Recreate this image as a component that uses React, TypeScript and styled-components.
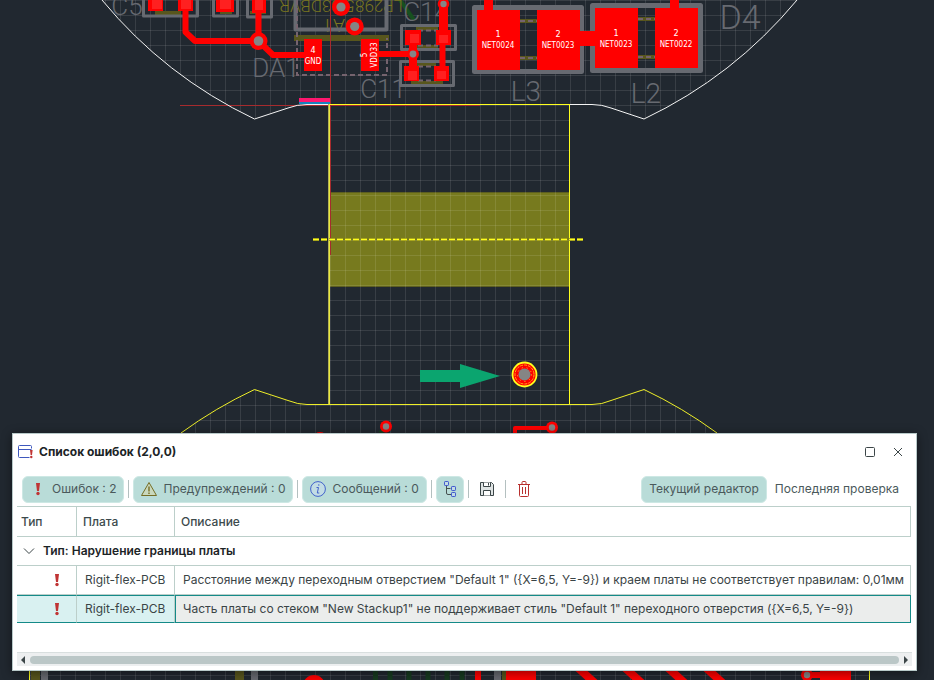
import React from 'react';
import styled, { createGlobalStyle } from 'styled-components';

const GlobalStyle = createGlobalStyle`
  *, *::before, *::after { box-sizing: border-box; }
  body { margin: 0; background: #212830; }
`;

const RED = '#ff0000';
const SILK = '#676a71';
const OLIVE = '#58561d';
const YELLOW = '#ffff1e';

/* ---------- layout ---------- */

const Workspace = styled.main`
  display: grid;
  grid-template: minmax(100vh, auto) / minmax(0, 1fr);
  background: #212830;
  font-family: Inter, "Open Sans", sans-serif;
  font-size: 12px;
  font-weight: 400;
  line-height: 16px;
  color: #3a4446;
`;

const Canvas = styled.svg`
  grid-area: 1 / 1;
  display: block;
  width: 100%;
  height: 100vh;
`;

const Dialog = styled.section`
  grid-area: 1 / 1;
  align-self: end;
  z-index: 1;
  margin: 0 17px 9px 12px;
  padding: 0 4px 4px;
  background: #fff;
  border: 1px solid #b8c9c9;
  box-shadow: 0 2px 10px rgba(0, 0, 0, 0.45);
`;

const TitleBar = styled.header`
  display: flex;
  align-items: center;
  height: 36px;
  gap: 6px;
  padding-right: 3px;
`;

const Title = styled.h1`
  flex: 1;
  margin: 0;
  font-size: 12px;
  font-weight: 700;
  color: #1c2426;
`;

const WindowButton = styled.button`
  display: flex;
  align-items: center;
  justify-content: center;
  width: 22px;
  height: 22px;
  padding: 0;
  border: 0;
  background: none;
  color: #3c4648;
`;

const Toolbar = styled.div`
  display: flex;
  align-items: center;
  height: 36px;
  gap: 4px;
  padding: 2px 5px 0 5px;
`;

const ToolButton = styled.button<{ $active?: boolean; $square?: boolean }>`
  display: flex;
  align-items: center;
  justify-content: center;
  gap: 6px;
  height: 27px;
  min-width: 28px;
  padding: ${(p) => (p.$square ? '0' : '0 7px')};
  border: 1px solid ${(p) => (p.$active ? '#cde8e4' : 'transparent')};
  border-radius: 6px;
  background: ${(p) => (p.$active ? '#b9dcd8' : 'transparent')};
  font: inherit;
  color: #4a595b;
  white-space: nowrap;
`;

const Separator = styled.span`
  width: 1px;
  height: 18px;
  background: #b4c0c0;
`;

const ViewSwitch = styled.div`
  display: flex;
  margin-left: auto;
`;

const TableArea = styled.div`
  height: 146px;
  overflow: hidden;
  padding-right: 1px;
`;

const ErrorTable = styled.table`
  width: 100%;
  table-layout: fixed;
  border-collapse: separate;
  border-spacing: 0;
  text-align: left;
  white-space: nowrap;
`;

const HeadCell = styled.th<{ $width?: number }>`
  width: ${(p) => (p.$width ? `${p.$width}px` : 'auto')};
  height: 31px;
  padding: 0 6px;
  border: solid #bccfca;
  border-width: 1px 1px 1px 0;
  font-weight: 500;
  color: #3c4a4c;
  &:first-child { padding-left: 4px; }
`;

const GroupCell = styled.th`
  height: 29px;
  padding: 0 6px;
  border-bottom: 1px solid #bccfca;
  font-weight: 600;
  color: #1c2426;
`;

const GroupToggle = styled.button`
  display: flex;
  align-items: center;
  gap: 8px;
  padding: 0;
  border: 0;
  background: none;
  font: inherit;
  color: inherit;
`;

const Row = styled.tr<{ $selected?: boolean }>`
  td {
    height: ${(p) => (p.$selected ? '28px' : '29px')};
    padding: 0 8px;
    overflow: hidden;
    border: solid #bccfca;
    border-width: 0 1px 1px 0;
    ${(p) =>
      p.$selected &&
      `
      background: #d9f1f1;
      border-width: 1px 1px 1px 0;
      border-top-color: #148a88;
      border-bottom-color: #148a88;
    `}
  }
  td:first-child { padding: 0 15px 0 0; }
  td:first-child svg { display: block; margin-left: auto; }
  td:last-child {
    ${(p) => p.$selected && 'background: #ebedec; border: 1px solid #148a88; padding-left: 7px;'}
  }
`;

const ScrollBar = styled.div`
  display: flex;
  align-items: center;
  gap: 4px;
  height: 14px;
  padding: 0 3px;
  background: #edeff0;
  border-top: 1px solid #d9dfdf;
`;

const ScrollArrow = styled.button`
  display: flex;
  padding: 0;
  border: 0;
  background: none;
`;

const ScrollThumb = styled.span`
  flex: 1;
  height: 8px;
  border-radius: 4px;
  background: #bbc7c7;
`;

/* ---------- icons ---------- */

const ErrorMark = ({ width = 8 }: { width?: number }) => (
  <svg width={width} height="14" viewBox="0 0 8 14" aria-hidden="true">
    <path d="M2 1h4l-1 8H3z" fill="#c03434" />
    <circle cx="4" cy="11.5" r="1.7" fill="#c03434" />
  </svg>
);

const ListIcon = () => (
  <svg width="16" height="16" viewBox="0 0 16 16" fill="none" aria-hidden="true">
    <path d="M12.500 13.500H2.500a1 1 0 0 1-1-1v-10a1 1 0 0 1 1-1h11a1 1 0 0 1 1 1v2M1.500 5.500h13" stroke="#3f58bd" />
    <path d="M13 6h2.600l-.600 5h-1.400z" fill="#c03434" />
    <circle cx="14.300" cy="13" r="1.200" fill="#c03434" />
  </svg>
);

const WarningIcon = () => (
  <svg width="16" height="16" viewBox="0 0 16 16" fill="none" stroke="#756d24" strokeLinejoin="round" aria-hidden="true">
    <path d="M8 1.500 15.500 14.500H.500z" fill="#c9d8bd" />
    <path d="M8 5.500v5" strokeWidth="1.400" />
    <path d="M8 11.500v1.500" strokeWidth="1.400" />
  </svg>
);

const InfoIcon = () => (
  <svg width="16" height="16" viewBox="0 0 16 16" fill="none" stroke="#4262cb" aria-hidden="true">
    <circle cx="8" cy="8" r="7.400" fill="#c2dce4" />
    <path d="M6.500 6.500h2l-1.200 5.500h2" />
    <circle cx="8.800" cy="4" r=".7" fill="#4262cb" stroke="none" />
  </svg>
);

const TreeIcon = () => (
  <svg width="14" height="18" viewBox="0 0 14 18" fill="none" aria-hidden="true">
    <path d="M3.500 5.500V13a1.500 1.500 0 0 0 1.500 1.500H8M3.500 8.500h4" stroke="#45504f" />
    <g stroke="#3f58cf" fill="#c2dce4">
      <rect x="1.500" y="1.500" width="4" height="4" rx=".7" />
      <rect x="8.500" y="6.500" width="4" height="4" rx=".7" />
      <rect x="8.500" y="12.500" width="4" height="4" rx=".7" />
    </g>
  </svg>
);

const SaveIcon = () => (
  <svg width="16" height="16" viewBox="0 0 16 16" fill="none" stroke="#3c4648" aria-hidden="true">
    <path d="M1.500 1.500h11l2 2v11h-13z" fill="#dfe4e4" strokeLinejoin="round" />
    <path d="M4.500 1.500v4h7v-4M9.500 2v2.500M4.500 14.500v-5h7v5" fill="#fff" />
  </svg>
);

const TrashIcon = () => (
  <svg width="14" height="16" viewBox="0 0 14 16" fill="none" stroke="#b8302f" aria-hidden="true">
    <path d="M1 3.500h12M5 3V1.500a1 1 0 0 1 1-1h2a1 1 0 0 1 1 1V3M2.500 3.500v11a1 1 0 0 0 1 1h7a1 1 0 0 0 1-1v-11M5.500 6v7M8.500 6v7" />
  </svg>
);

const ChevronDown = () => (
  <svg width="12" height="8" viewBox="0 0 12 8" fill="none" stroke="#3c4648" aria-hidden="true">
    <path d="M1 1.500l5 5 5-5" />
  </svg>
);

const Arrow = ({ dir }: { dir: 'left' | 'right' }) => (
  <svg width="6" height="8" viewBox="0 0 6 8" aria-hidden="true">
    <path d={dir === 'left' ? 'M5 0v8L1 4z' : 'M1 0v8l4-4z'} fill="#3c4648" />
  </svg>
);

/* ---------- circuit board ---------- */

const BoardText = styled.text<{ $size: number; $fill: string }>`
  font-family: "DejaVu Sans Condensed", "DejaVu Sans", sans-serif;
  font-size: ${(p) => p.$size}px;
  font-weight: 400;
  fill: ${(p) => p.$fill};
  text-anchor: middle;
`;

const Designator = styled(BoardText)`
  font-family: Roboto, sans-serif;
  font-weight: 300;
`;

type Via = { x: number; y: number; r: number; hole: number };
const vias: Via[] = [
  { x: 258.5, y: 41, r: 9, hole: 4.8 },
  { x: 341, y: 7, r: 9, hole: 4.6 },
  { x: 354.7, y: 26.5, r: 9, hole: 4.6 },
  { x: 413, y: 54, r: 6, hole: 3.4 },
  { x: 443.5, y: 4, r: 5.8, hole: 3.2 },
  { x: 386, y: 426.5, r: 6, hole: 3.2 },
  { x: 552, y: 427.5, r: 6, hole: 3.2 },
  { x: 314, y: 686, r: 11, hole: 4 },
  { x: 807, y: 675, r: 6, hole: 3.2 },
];

const pads = [
  [148, -5, 15, 16], [178, -5, 15, 16], [216, -5, 18, 17], [252, -5, 14, 18],
  [304, 39, 18, 32], [361, 39, 18, 32],
  [405, 30, 16, 15], [436, 30, 15, 15], [404, 66, 15, 15], [434, 66, 15, 15],
  [477, 10, 43, 60], [537, 10, 43, 60], [595, 8, 43, 60], [655, 8, 43, 60],
  [475, 668, 6, 14], [506, 668, 30, 14], [820, 668, 31, 14],
];

const padLights = [
  [152, 0, 10, 9], [181, 0, 10, 9], [220, 0, 11, 9], [255, 0, 8, 10],
  [410, 34, 9, 9], [439, 35, 9, 8], [408, 71, 9, 9], [437, 71, 9, 8],
];

const silkBoxes = [
  [143.5, -8, 54, 24, 3], [213.5, -8, 24, 24, 3], [247.500, -8, 24, 25, 3],
  [401.5, 25.5, 54, 24, 3], [400.5, 61.5, 53, 24, 3],
  [474.5, 7.5, 107, 64, 5], [592.5, 5.5, 108, 65, 5],
];

const oliveBars = [
  [155, 11, 26, 4], [220, 11, 12, 3], [250, 11, 16, 3],
  [416, 27, 22, 3], [416, 45, 22, 3], [414, 63, 22, 3], [411, 81, 32, 3],
  [520, 19, 17, 4], [520, 56, 17, 4], [638, 17, 17, 4], [638, 55, 17, 4],
  [294, 35, 95, 6], [31, 670, 9, 10], [235, 670, 9, 10], [502, 670, 4, 10],
];

const BOARD_TOP = 'M102 0A449 449 0 0 0 254.500 119L288 108Q297 104.500 307 104.500H592Q602 104.500 611 108L644 119A449 449 0 0 0 797 0Z';
const BOARD_BOTTOM = 'M181 433A449 449 0 0 1 254.500 389.500L288 400.500Q298 404.500 307 404.500H592Q602 404.500 611 400.500L644 389.500A449 449 0 0 1 717 433';

const Board = () => (
  <Canvas viewBox="0 0 934 680" preserveAspectRatio="xMidYMax slice" role="img" aria-label="Плата Rigit-flex-PCB">
    <defs>
      <pattern id="grid" width="15" height="15" patternUnits="userSpaceOnUse">
        <path d="M.500 0V15M0 .500H15" stroke="#fff" strokeOpacity=".1" />
      </pattern>
    </defs>
    <rect width="934" height="680" fill="#212830" />
    <rect x="330" y="192" width="239" height="94" fill="#777a1e" />
    <path d="M330 192.500H569M330 286.500H569" stroke="#5c5e20" />
    <g fill="url(#grid)">
      <path d={BOARD_TOP} />
      <rect x="330" y="105" width="239" height="299" />
      <path d={`${BOARD_BOTTOM}Z`} />
      <rect x="30" y="670" width="839" height="10" />
    </g>

    <path d="M400 0L414 20" stroke="#17501f" strokeWidth="4" />
    <path d="M380 433L386 427" stroke="#17401f" strokeWidth="4" />
    <g fill={OLIVE}>
      {oliveBars.map(([x, y, w, h], i) => <rect key={i} x={x} y={y} width={w} height={h} />)}
    </g>
    <path d="M375.500 670v10M390 670v10M409 670v10M428 670v10M447 670v10M462 670v10" stroke="#173b20" strokeWidth="5" />
    <g transform="rotate(180 341 7)">
      <Designator $size={17} $fill="#7a7620" x="341" y="14">LP2985-33DBVR</Designator>
    </g>
    <g transform="rotate(180 340 26)">
      <Designator $size={19} $fill="#7a7620" x="340" y="33">DA1</Designator>
    </g>
    <g fill="none" stroke={SILK} strokeLinejoin="round">
      {silkBoxes.map(([x, y, w, h, s], i) => <rect key={i} x={x} y={y} width={w} height={h} strokeWidth={s} />)}
      <path d="M295.500 0V29.500H386.500V0" strokeWidth="4" />
    </g>
    <path d="M44.500 670v10M254.500 670v10M497.500 670v10" stroke={SILK} strokeWidth="7" />
    <path d="M297 0V75H387V38" fill="none" stroke="#75636e" strokeWidth="2" strokeDasharray="5 3" />
    <path d="M418 30.500h20M418 45.500h20M418 66.500h18M418 80.500h18M520 21h17M520 58h17M638 19h17M638 57h17" stroke="#75636e" strokeWidth="2" strokeDasharray="5 3" />

    <Designator $size={26} $fill={SILK} x="127" y="15">C5</Designator>
    <Designator $size={26} $fill={SILK} x="276" y="77">DA1</Designator>
    <Designator $size={26} $fill={SILK} x="426" y="21">C14</Designator>
    <Designator $size={26} $fill={SILK} x="383" y="98">C11</Designator>
    <Designator $size={28} $fill={SILK} x="526" y="101">L3</Designator>
    <Designator $size={28} $fill={SILK} x="646" y="103">L2</Designator>
    <Designator $size={34} $fill={SILK} x="740" y="29">D4</Designator>

    <g fill="none" stroke={RED} strokeWidth="6" strokeLinejoin="round">
      <path d="M185.500 0V32L195 41H258.500V5M258.500 41L273 55H305M379 54H413" />
      <path d="M413 44V67" strokeWidth="8" />
      <path d="M443.500 4V32" strokeWidth="9" />
      <path d="M442.500 44V67" />
      <path d="M488.500 0V11M674.500 0V9" strokeWidth="9" />
      <path d="M580 38.500H596" strokeWidth="15" />
      <path d="M515 436V428H552" strokeWidth="4" />
      <path d="M575 665L597 685M622 665L646 687M665 665L689 687M703 665L727 687" strokeWidth="8" />
      <path d="M807 675H822" />
    </g>
    <g fill={RED}>
      {pads.map(([x, y, w, h], i) => <rect key={i} x={x} y={y} width={w} height={h} />)}
    </g>
    <g fill="#ff2020">
      {padLights.map(([x, y, w, h], i) => <rect key={i} x={x} y={y} width={w} height={h} />)}
    </g>
    {vias.map((v, i) => (
      <g key={i}>
        <circle cx={v.x} cy={v.y} r={v.r} fill={RED} />
        <circle cx={v.x} cy={v.y} r={v.hole} fill="#858585" />
      </g>
    ))}
    <ellipse cx="320" cy="434" rx="4" ry="2" fill={RED} />

    <BoardText $size={9} $fill="#fff" x="313" y="53">4</BoardText>
    <BoardText $size={8} $fill="#fff" x="313" y="64">GND</BoardText>
    <g transform="rotate(-90 370 55)">
      <BoardText $size={8} $fill="#fff" x="370" y="52">5</BoardText>
      <BoardText $size={8} $fill="#fff" x="370" y="62">VDD33</BoardText>
    </g>
    <BoardText $size={9} $fill="#fff" x="498" y="37">1</BoardText>
    <BoardText $size={8} $fill="#fff" x="498" y="48">NET0024</BoardText>
    <BoardText $size={9} $fill="#fff" x="558" y="37">2</BoardText>
    <BoardText $size={8} $fill="#fff" x="558" y="48">NET0023</BoardText>
    <BoardText $size={9} $fill="#fff" x="616" y="36">1</BoardText>
    <BoardText $size={8} $fill="#fff" x="616" y="47">NET0023</BoardText>
    <BoardText $size={9} $fill="#fff" x="676" y="36">2</BoardText>
    <BoardText $size={8} $fill="#fff" x="676" y="47">NET0022</BoardText>

    <path d="M180 105.500H480M330.500 0V255" stroke="#a62b2e" />
    <g fill="none">
      <path d="M102 0A449 449 0 0 0 254.500 119L288 108Q297 104.500 307 104.500H330M570 104.500H592Q602 104.500 611 108L644 119A449 449 0 0 0 797 0" stroke="#f4f4f4" />
      <path d={BOARD_BOTTOM} stroke="#eeee28" />
      <path d="M569.500 104V404M330 104.500H569M29.500 670V680M869.500 670V680" stroke={YELLOW} />
      <path d="M328.500 104V404" stroke="#b5b254" />
      <path d="M329.500 104V404" stroke="#e9e93a" />
    </g>
    <rect x="299" y="98" width="31" height="4" fill="#ff176f" />
    <rect x="299" y="102" width="31" height="2" fill="#1683bd" />
    <path d="M313 239.500H584" stroke="#aaa81b" strokeWidth="3" strokeDasharray="6 2" />
    <path d="M313 239.500H584" stroke={YELLOW} strokeDasharray="6 2" />
    <path d="M420 370H460V364L500 376L460 388V382H420Z" fill="#0ba56f" />
    <circle cx="524.500" cy="374.500" r="12" fill={RED} stroke={YELLOW} strokeWidth="1.800" />
    <circle cx="524.500" cy="374.500" r="9.500" fill="none" stroke="#ffad16" strokeDasharray="3 1" />
    <circle cx="524.500" cy="374.500" r="7" fill="none" stroke="#ffd21e" strokeDasharray="1 4" />
    <circle cx="524.500" cy="374.500" r="6" fill="#858585" />
  </Canvas>
);

/* ---------- page ---------- */

const rows = [
  { board: 'Rigit-flex-PCB', text: 'Расстояние между переходным отверстием "Default 1" ({X=6,5, Y=-9}) и краем платы не соответствует правилам: 0,01мм' },
  { board: 'Rigit-flex-PCB', text: 'Часть платы со стеком "New Stackup1" не поддерживает стиль "Default 1" переходного отверстия ({X=6,5, Y=-9})', selected: true },
];

export default function App() {
  return (
    <Workspace>
      <GlobalStyle />
      <Board />
      <Dialog role="dialog" aria-labelledby="errors-title">
        <TitleBar>
          <ListIcon />
          <Title id="errors-title">Список ошибок (2,0,0)</Title>
          <WindowButton aria-label="Развернуть">
            <svg width="10" height="10" viewBox="0 0 10 10" fill="none" stroke="currentColor"><rect x=".5" y=".5" width="9" height="9" rx="1" /></svg>
          </WindowButton>
          <WindowButton aria-label="Закрыть">
            <svg width="10" height="10" viewBox="0 0 10 10" fill="none" stroke="currentColor"><path d="M1 1l8 8M9 1L1 9" /></svg>
          </WindowButton>
        </TitleBar>
        <Toolbar>
          <ToolButton $active aria-pressed="true"><ErrorMark width={16} />Ошибок : 2</ToolButton>
          <Separator />
          <ToolButton $active aria-pressed="true"><WarningIcon />Предупреждений : 0</ToolButton>
          <Separator />
          <ToolButton $active aria-pressed="true"><InfoIcon />Сообщений : 0</ToolButton>
          <Separator />
          <ToolButton $active $square aria-pressed="true" aria-label="Группировать"><TreeIcon /></ToolButton>
          <Separator />
          <ToolButton $square aria-label="Сохранить"><SaveIcon /></ToolButton>
          <Separator />
          <ToolButton $square aria-label="Удалить"><TrashIcon /></ToolButton>
          <ViewSwitch>
            <ToolButton $active aria-pressed="true">Текущий редактор</ToolButton>
            <ToolButton aria-pressed="false">Последняя проверка</ToolButton>
          </ViewSwitch>
        </Toolbar>
        <TableArea>
          <ErrorTable>
            <thead>
              <tr>
                <HeadCell $width={60}>Тип</HeadCell>
                <HeadCell $width={98}>Плата</HeadCell>
                <HeadCell>Описание</HeadCell>
              </tr>
            </thead>
            <tbody>
              <tr>
                <GroupCell colSpan={3}>
                  <GroupToggle aria-expanded="true"><ChevronDown />Тип: Нарушение границы платы</GroupToggle>
                </GroupCell>
              </tr>
              {rows.map((row, i) => (
                <Row key={i} $selected={row.selected}>
                  <td><ErrorMark /></td>
                  <td>{row.board}</td>
                  <td>{row.text}</td>
                </Row>
              ))}
            </tbody>
          </ErrorTable>
        </TableArea>
        <ScrollBar>
          <ScrollArrow aria-label="Влево"><Arrow dir="left" /></ScrollArrow>
          <ScrollThumb />
          <ScrollArrow aria-label="Вправо"><Arrow dir="right" /></ScrollArrow>
        </ScrollBar>
      </Dialog>
    </Workspace>
  );
}
